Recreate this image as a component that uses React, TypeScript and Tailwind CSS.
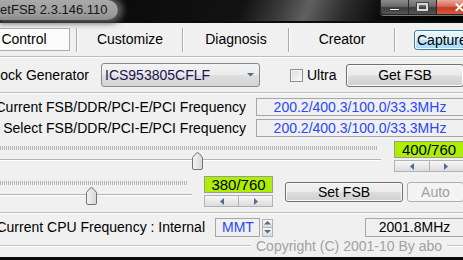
import React from "react";

// small pieces
const Sep = () => (
  <div className="h-[2px] w-full shrink-0 border-t border-[#bdbdbd] bg-white" />
);

const VSep = () => (
  <div className="h-[24px] w-[2px] shrink-0 border-l border-[#a9a9a9] bg-white" />
);

const Arrow = ({ dir }: { dir: "left" | "right" | "up" | "down" }) => {
  const paths = {
    left: "M4 0 L0 3.5 L4 7 Z",
    right: "M0 0 L4 3.5 L0 7 Z",
    up: "M0 3.5 L3.5 0 L7 3.5 Z",
    down: "M0 0 L7 0 L3.5 3.5 Z",
  };
  const vertical = dir === "up" || dir === "down";
  return (
    <svg
      width={vertical ? 7 : 4}
      height={vertical ? 4 : 7}
      viewBox={vertical ? "0 0 7 4" : "0 0 4 7"}
    >
      <path d={paths[dir]} fill="#4d6d92" />
    </svg>
  );
};

const HSpin = () => (
  <div className="flex h-[12px] w-full">
    <div className="flex flex-1 items-center justify-center border border-[#b3b3b3] bg-[linear-gradient(#f7f7f7,#dcdcdc)]">
      <Arrow dir="left" />
    </div>
    <div className="flex flex-1 items-center justify-center border border-l-0 border-[#b3b3b3] bg-[linear-gradient(#f7f7f7,#dcdcdc)]">
      <Arrow dir="right" />
    </div>
  </div>
);

const Thumb = () => (
  <svg width="11" height="18" viewBox="0 0 11 18">
    <defs>
      <linearGradient id="tg" x1="0" x2="1" y1="0" y2="0">
        <stop offset="0" stopColor="#f4f4f4" />
        <stop offset="1" stopColor="#d6d6d6" />
      </linearGradient>
    </defs>
    <path
      d="M0.5 5.5 L4 1.3 Q5.5 0 7 1.3 L10.5 5.5 V16 Q10.5 17.5 9 17.5 H2 Q0.5 17.5 0.5 16 Z"
      fill="url(#tg)"
      stroke="#747474"
    />
  </svg>
);

const Button = ({
  children,
  className,
}: {
  children: React.ReactNode;
  className: string;
}) => (
  <div
    className={`flex shrink-0 items-center justify-center rounded-[3px] border border-[#707070] bg-[linear-gradient(#f2f2f2_0%,#ebebeb_48%,#dddddd_52%,#cfcfcf_100%)] shadow-[inset_0_0_0_1px_#fbfbfb] ${className}`}
  >
    {children}
  </div>
);

const GreenBox = ({ value }: { value: string }) => (
  <div className="flex h-[17px] w-full items-center justify-center border border-[#9a9a9a] bg-[#acf000] text-[15px] leading-none">
    {value}
  </div>
);

const App = () => {
  return (
    <div className="flex h-[260px] w-[463px] flex-col overflow-hidden bg-[#f0f0f0] font-['Liberation_Sans',Arial,sans-serif] text-[14px] text-black">
      {/* Title bar */}
      <div className="flex h-[23px] shrink-0 border-b-2 border-[#0c0c0c] bg-[linear-gradient(112deg,#040404_0%,#121212_52%,#3a3a3a_60%,#606060_66%,#2c2c2c_74%,#0a0a0a_82%,#000_100%)]">
        <div className="flex h-[20px] w-[118px] shrink-0 items-center rounded-r-full bg-[linear-gradient(#a9a9a9,#9c9c9c_70%,#8a8a8a)] shadow-[2px_0_6px_3px_#5a5a5a]">
          <span className="ml-[-10px] whitespace-nowrap text-[13px] text-[#161616]">
            GetFSB 2.3.146.110
          </span>
        </div>
        <div className="flex-1" />
        <div className="mr-[-14px] flex h-[15px] w-[97px] shrink-0 overflow-hidden rounded-b-[4px] border border-t-0 border-[#262626] shadow-[0_1px_0_#7a7a7a]">
          <div className="flex w-[29px] items-end justify-center border-r border-[#2a2a2a] bg-[linear-gradient(#8c8c8c,#6a6a6a_45%,#3c3c3c_55%,#555)] pb-[3px]">
            <div className="h-[3px] w-[11px] border border-[#3a3a3a] bg-white" />
          </div>
          <div className="flex w-[28px] items-center justify-center border-r border-[#2a2a2a] bg-[linear-gradient(#8c8c8c,#6a6a6a_45%,#3c3c3c_55%,#555)]">
            <div className="h-[8px] w-[11px] border-2 border-[#d8d8d8] outline outline-1 outline-[#444]" />
          </div>
          <div className="flex w-[40px] items-center justify-start bg-[linear-gradient(#e9a89a,#d66a55_45%,#c23a22_55%,#d9593f)] pl-[17px] text-[13px] font-bold leading-none text-white">
            ✕
          </div>
        </div>
      </div>

      {/* Tabs */}
      <div className="flex h-[33px] shrink-0 items-start pt-[5px]">
        <div className="ml-[-22px] flex h-[23px] w-[92px] shrink-0 items-center justify-center border border-[#adadad] bg-[#fcfcfc]">
          Control
        </div>
        <div className="ml-[6px]">
          <VSep />
        </div>
        <div className="flex h-[23px] w-[104px] shrink-0 items-center justify-center">
          Customize
        </div>
        <VSep />
        <div className="flex h-[23px] w-[104px] shrink-0 items-center justify-center">
          Diagnosis
        </div>
        <VSep />
        <div className="flex h-[23px] w-[104px] shrink-0 items-center justify-center">
          Creator
        </div>
        <VSep />
        <div className="ml-[18px] mt-[2px] flex h-[20px] w-[60px] shrink-0 items-center rounded-[3px] border border-[#3c7fb1] bg-[linear-gradient(#eaf6fd,#d9f0fc_48%,#bee6fd_52%,#a7d9f5)] pl-[2px] shadow-[inset_0_0_0_1px_#f4fbff]">
          Capture
        </div>
      </div>
      <Sep />

      {/* Clock generator */}
      <div className="flex h-[34px] shrink-0 items-center">
        <div className="ml-[-13px] w-[114px] shrink-0 whitespace-nowrap">
          Clock Generator
        </div>
        <div className="flex h-[24px] w-[159px] shrink-0 items-center justify-between rounded-[3px] border border-[#8a8a8a] bg-[linear-gradient(#f3f3f3,#ebebeb_48%,#dedede_52%,#d4d4d4)] pl-[3px] pr-[5px] text-[#1c1250]">
          <span>ICS953805CFLF</span>
          <Arrow dir="down" />
        </div>
        <div className="ml-[30px] h-[13px] w-[13px] shrink-0 border border-[#8e8f8f] bg-[linear-gradient(135deg,#dcdcdc,#fafafa)] shadow-[inset_0_0_0_1px_#f4f4f4]" />
        <div className="ml-[4px] w-[39px] shrink-0">Ultra</div>
        <Button className="h-[23px] w-[118px]">Get FSB</Button>
      </div>
      <Sep />

      {/* Frequencies */}
      <div className="flex shrink-0 flex-col gap-[3px] pt-[4px]">
        {[
          "Current FSB/DDR/PCI-E/PCI Frequency",
          "Select FSB/DDR/PCI-E/PCI Frequency",
        ].map((label) => (
          <div key={label} className="flex h-[18px] items-center">
            <div className="flex w-[246px] shrink-0 justify-end whitespace-nowrap">
              {label}
            </div>
            <div className="ml-[10px] flex h-[18px] w-[208px] shrink-0 items-center justify-center border border-[#a6a6a6] text-[#2a46ff]">
              200.2/400.3/100.0/33.3MHz
            </div>
          </div>
        ))}
      </div>

      {/* FSB slider */}
      <div className="mt-[4px] flex h-[32px] shrink-0 items-start">
        <div className="relative h-[32px] w-[394px] shrink-0">
          <div className="mt-[5px] h-[4px] w-[377px] bg-[repeating-linear-gradient(90deg,#b7b7b7_0_1px,transparent_1px_2px)]" />
          <div className="mt-[9px] h-[2px] w-[381px] border-t border-[#b4b4b4] bg-white" />
          <div className="absolute left-[192px] top-[11px]">
            <Thumb />
          </div>
        </div>
        <div className="flex w-[70px] shrink-0 flex-col gap-[2px]">
          <GreenBox value="400/760" />
          <HSpin />
        </div>
      </div>

      {/* DDR slider + buttons */}
      <div className="mt-[3px] flex h-[31px] shrink-0 items-start">
        <div className="relative h-[31px] w-[204px] shrink-0">
          <div className="mt-[5px] h-[4px] w-[187px] bg-[repeating-linear-gradient(90deg,#b7b7b7_0_1px,transparent_1px_2px)]" />
          <div className="mt-[9px] h-[2px] w-[192px] border-t border-[#b4b4b4] bg-white" />
          <div className="absolute left-[86px] top-[11px]">
            <Thumb />
          </div>
        </div>
        <div className="flex w-[69px] shrink-0 flex-col gap-[2px]">
          <GreenBox value="380/760" />
          <HSpin />
        </div>
        <Button className="ml-[12px] mt-[6px] h-[20px] w-[118px]">Set FSB</Button>
        <div className="ml-[4px] mt-[6px] flex h-[20px] w-[57px] shrink-0 items-center justify-center rounded-[3px] border border-[#adb2b5] bg-[#f4f4f4] text-[#a0a0a0]">
          Auto
        </div>
      </div>

      <div className="mt-[5px]">
        <Sep />
      </div>

      {/* CPU frequency */}
      <div className="mt-[4px] flex h-[19px] shrink-0 items-center">
        <div className="flex w-[205px] shrink-0 justify-end whitespace-nowrap">
          Current CPU Frequency : Internal
        </div>
        <div className="ml-[10px] flex h-[19px] w-[45px] shrink-0 items-center border border-[#a6a6a6] pl-[6px] text-[#2a46ff]">
          MMT
        </div>
        <div className="ml-[2px] flex h-[18px] w-[11px] shrink-0 flex-col">
          <div className="flex flex-1 items-center justify-center border border-[#b3b3b3] bg-[linear-gradient(#f7f7f7,#dcdcdc)]">
            <Arrow dir="up" />
          </div>
          <div className="flex flex-1 items-center justify-center border border-t-0 border-[#b3b3b3] bg-[linear-gradient(#f7f7f7,#dcdcdc)]">
            <Arrow dir="down" />
          </div>
        </div>
        <div className="ml-[92px] flex h-[19px] w-[99px] shrink-0 items-center justify-center border border-[#a6a6a6]">
          2001.8MHz
        </div>
      </div>

      {/* Copyright */}
      <div className="mt-[2px] flex h-[14px] shrink-0 items-center">
        <div className="h-[2px] flex-1 border-t border-[#c4c4c4] bg-white" />
        <div className="whitespace-nowrap px-[5px] text-[#a2a2a2]">
          Copyright (C) 2001-10 By abo
        </div>
        <div className="h-[2px] w-[16px] border-t border-[#c4c4c4] bg-white" />
      </div>

      <div className="mt-auto h-[3px] shrink-0 bg-[#0a0a0a]" />
    </div>
  );
};

export default App;
